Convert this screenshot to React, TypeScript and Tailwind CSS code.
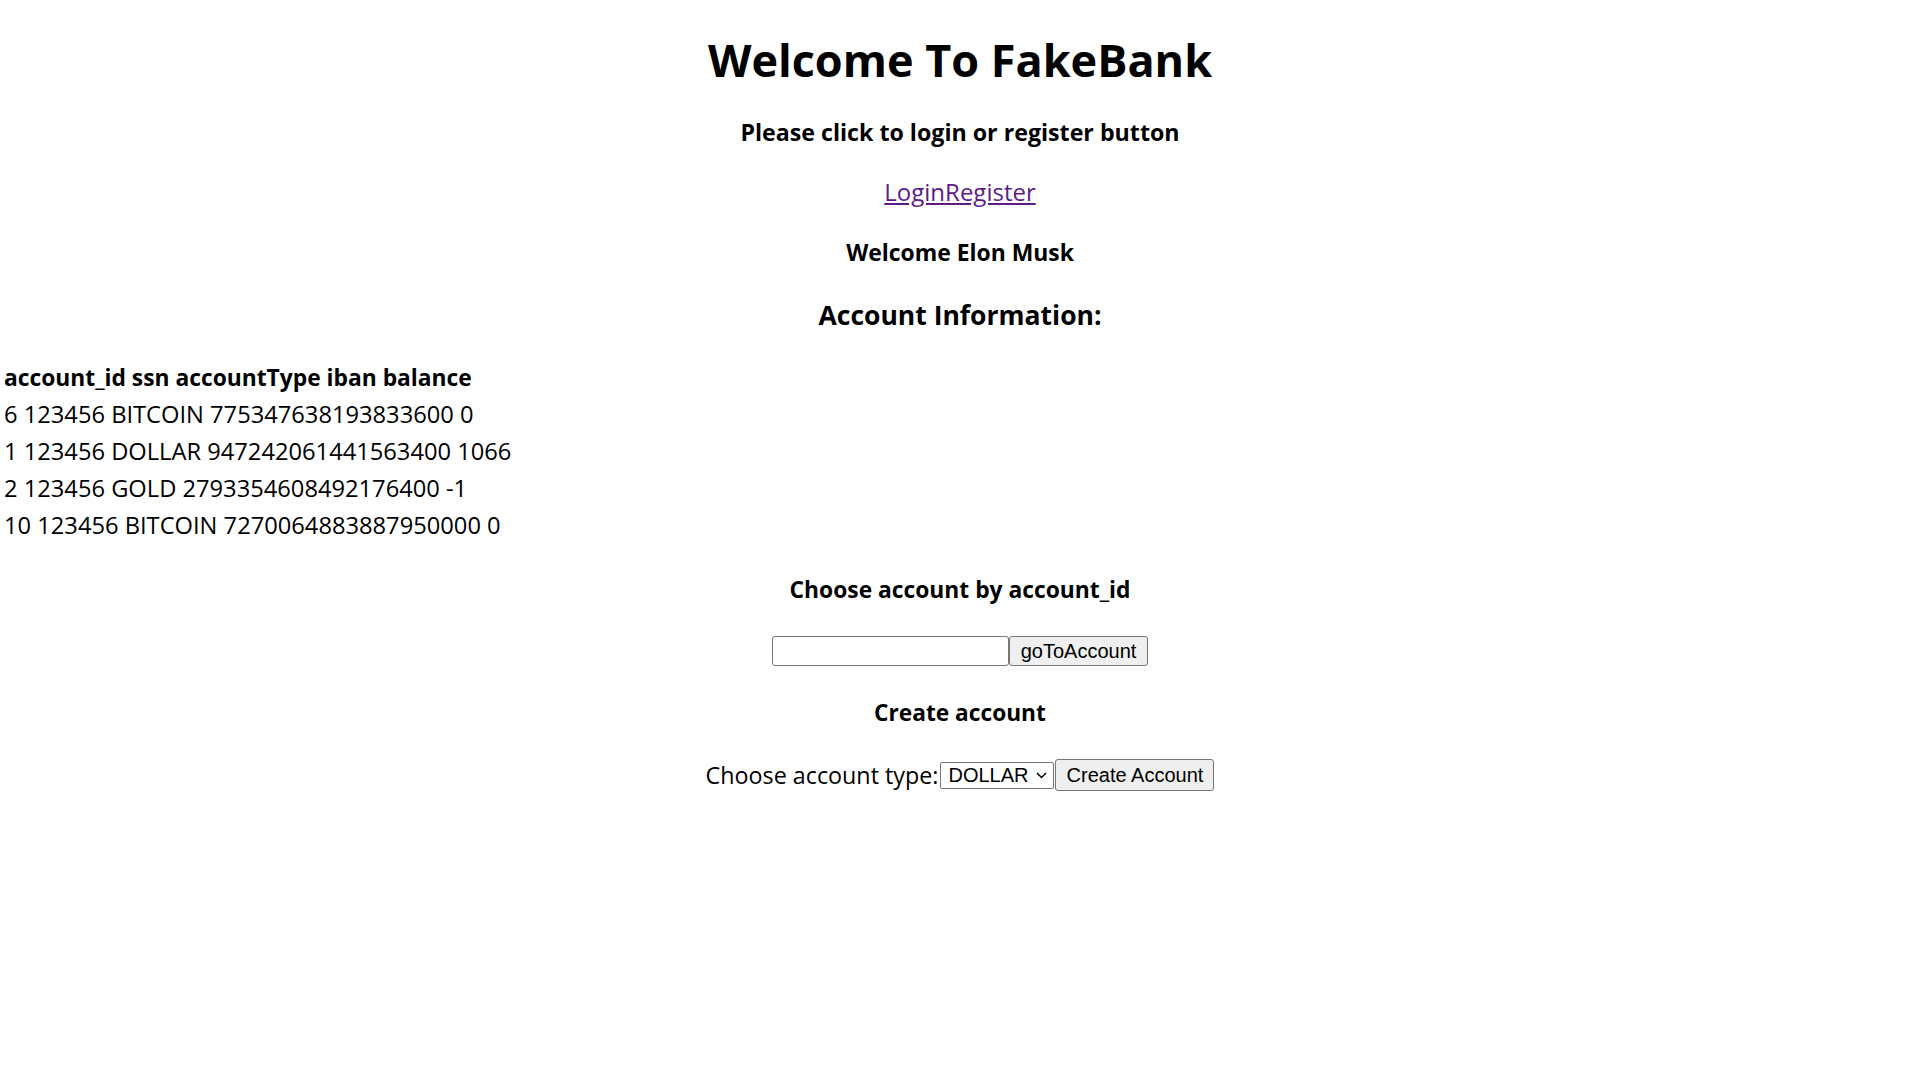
import React from 'react';

const accounts = [
  { id: 6, ssn: '123456', type: 'BITCOIN', iban: '775347638193833600', balance: 0 },
  { id: 1, ssn: '123456', type: 'DOLLAR', iban: '947242061441563400', balance: 1066 },
  { id: 2, ssn: '123456', type: 'GOLD', iban: '2793354608492176400', balance: -1 },
  { id: 10, ssn: '123456', type: 'BITCOIN', iban: '7270064883887950000', balance: 0 },
];

const ubuntu = "font-['Open_Sans',sans-serif]";
const arial = "font-['Liberation_Sans',Arial,sans-serif]";

export default function App() {
  return (
    <div className={`min-h-screen bg-white text-black ${ubuntu}`}>
      <div className="flex flex-col items-center pt-[32px]">
        <h1 className="text-[45px] leading-[56px] font-bold">Welcome To FakeBank</h1>
        <h4 className="mt-[29px] text-[23.2px] leading-[30px] font-bold">Please click to login or register button</h4>
        <div className="mt-[30px] text-[24px] leading-[30px]">
          <a href="#" className="text-[#5e1a8b] underline">Login</a>
          <a href="#" className="text-[#5e1a8b] underline">Register</a>
        </div>
        <h4 className="mt-[31px] text-[22.9px] leading-[30px] font-bold">Welcome Elon Musk</h4>
        <h3 className="mt-[30px] text-[26.5px] leading-[34px] font-bold">Account Information:</h3>
      </div>

      <div className="mt-[27px] pl-[4px] text-[23.7px] leading-[37px]">
        <div className="font-bold text-[22.8px]">account_id ssn accountType iban balance</div>
        {accounts.map(a => (
          <div key={a.id}>
            {a.id} {a.ssn} {a.type} {a.iban} {a.balance}
          </div>
        ))}
      </div>

      <div className="flex flex-col items-center">
        <h4 className="mt-[31px] text-[22.8px] leading-[30px] font-bold">Choose account by account_id</h4>
        <div className="mt-[31px] flex h-[30px]">
          <input
            type="text"
            className="w-[237px] h-[30px] border-[1.5px] border-[#767676] rounded-[3px] bg-white px-1 outline-none"
          />
          <button className={`w-[139px] h-[30px] border-[1.5px] border-[#767676] rounded-[3px] bg-[#efefef] text-[20px] leading-none ${arial}`}>
            goToAccount
          </button>
        </div>
        <h4 className="mt-[32px] text-[22.7px] leading-[30px] font-bold">Create account</h4>
        <div className="mt-[31px] flex items-center h-[32px]">
          <label className="text-[23.3px] leading-[30px]">Choose account type:</label>
          <div className="relative ml-[2px] w-[114px] h-[27px] border-[1.5px] border-[#767676] rounded-[2px] bg-white">
            <select className={`appearance-none w-full h-full bg-transparent pl-[7px] text-[20px] leading-none outline-none ${arial}`} defaultValue="DOLLAR">
              <option>DOLLAR</option>
              <option>BITCOIN</option>
              <option>GOLD</option>
            </select>
            <svg className="pointer-events-none absolute right-[6px] top-[9px]" width="11" height="7" viewBox="0 0 11 7">
              <path d="M1 1l4.5 4.5L10 1" fill="none" stroke="#000" strokeWidth="1.5" />
            </svg>
          </div>
          <button className={`ml-[1px] w-[159px] h-[32px] border-[1.5px] border-[#767676] rounded-[3px] bg-[#efefef] text-[20px] leading-none ${arial}`}>
            Create Account
          </button>
        </div>
      </div>
    </div>
  );
}
